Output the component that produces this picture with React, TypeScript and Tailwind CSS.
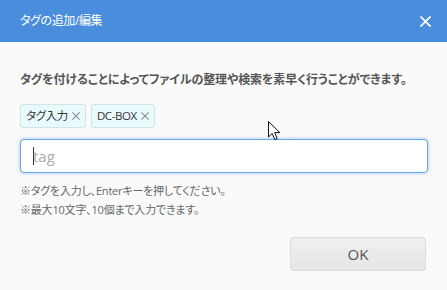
import React from "react";

const font = { fontFamily: '"Open Sans", "Noto Sans CJK JP", sans-serif', fontFeatureSettings: '"palt"' };

function XIcon({ size, color, stroke }: { size: number; color: string; stroke: number }) {
  return (
    <svg width={size} height={size} viewBox="0 0 10 10">
      <path d="M1 1L9 9M9 1L1 9" stroke={color} strokeWidth={stroke} strokeLinecap="square" />
    </svg>
  );
}

function Tag({ label }: { label: string }) {
  return (
    <div className="flex items-center h-[24px] pl-[5px] pr-[5px] gap-[4px] rounded-[3px] border border-[#d3e3e6] bg-[#e9fafd] text-[11.5px] tracking-[-0.4px] text-[#333]">
      <span>{label}</span>
      <XIcon size={8} color="#8a8f93" stroke={1.4} />
    </div>
  );
}

export default function App() {
  return (
    <div className="relative w-[447px] h-[290px] overflow-hidden bg-[#fafafa]" style={font}>
      <div className="flex items-center justify-between h-[42px] bg-[#4a8ddc] pl-[20px] pr-[16px]">
        <span className="text-[12px] tracking-[-0.4px] text-white">タグの追加/編集</span>
        <XIcon size={11} color="#ffffff" stroke={1.6} />
      </div>
      <div className="flex flex-col px-[20px]">
        <p className="mt-[28px] whitespace-nowrap text-[12px] tracking-[-0.1px] leading-[20px] font-bold text-[#555]">
          タグを付けることによってファイルの整理や検索を素早く行うことができます。
        </p>
        <div className="mt-[14px] flex gap-[5px]">
          <Tag label="タグ入力" />
          <Tag label="DC-BOX" />
        </div>
        <div className="mt-[11px] h-[34px] w-[408px] rounded-[4px] border border-[#66a9ea] bg-white shadow-[0_0_4px_rgba(102,169,234,0.6)] flex items-center pl-[12px]">
          <span className="w-px h-[18px] bg-[#333]" />
          <span className="text-[15px] text-[#aaa] -ml-px">tag</span>
        </div>
        <div className="mt-[8px] whitespace-nowrap text-[11px] tracking-[-0.2px] leading-[19px] text-[#666]">
          <p>※タグを入力し、Enterキーを押してください。</p>
          <p>※最大10文字、10個まで入力できます。</p>
        </div>
        <div className="mt-[18px] flex justify-end pr-px">
          <button className="w-[136px] h-[34px] rounded-[3px] border border-[#dcdcdc] bg-gradient-to-b from-[#efefef] to-[#e6e6e6] text-[15px] text-[#555]">
            OK
          </button>
        </div>
      </div>
      <svg className="absolute left-[268px] top-[121px]" width="14" height="21" viewBox="0 0 14 21">
        <path d="M0.5 0.5 L0.5 16 L4.2 12.4 L6.8 18.6 L9.2 17.6 L6.7 11.6 L11.8 11.6 Z" fill="#fff" stroke="#111" strokeWidth="1" strokeLinejoin="miter" />
      </svg>
    </div>
  );
}
